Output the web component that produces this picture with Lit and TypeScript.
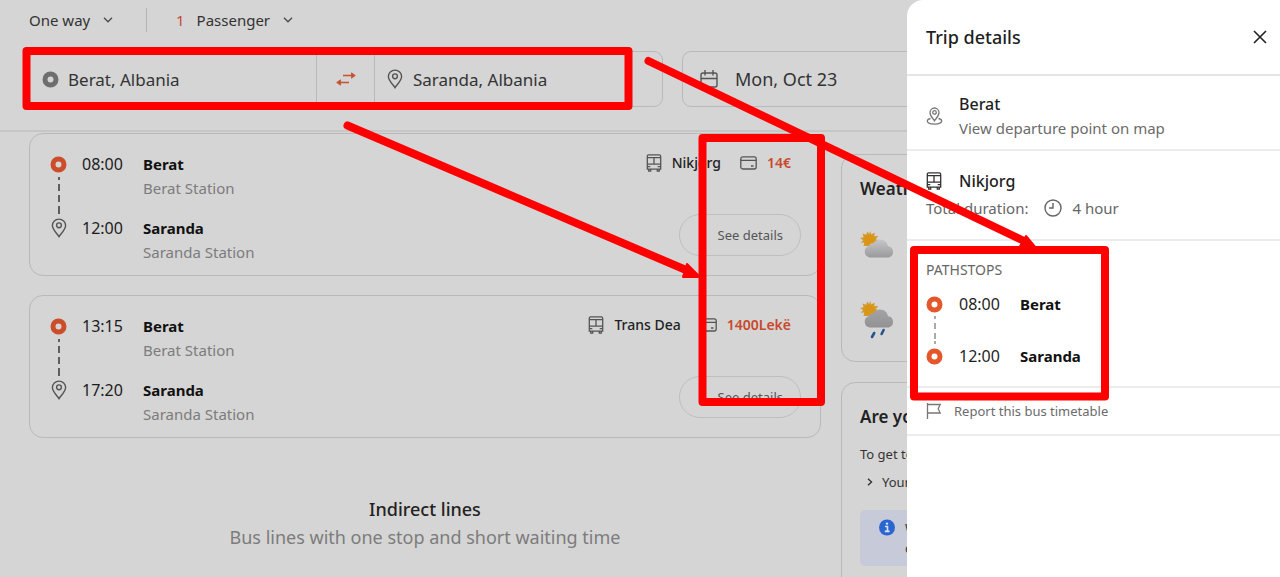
import { LitElement, html, css, svg, nothing } from "lit";
import { customElement } from "lit/decorators.js";

interface Stop {
  time: string;
  city: string;
  station: string;
}

interface Trip {
  operator: string;
  price: string;
  stops: Stop[];
}

const TRIPS: Trip[] = [
  {
    operator: "Nikjorg",
    price: "14€",
    stops: [
      { time: "08:00", city: "Berat", station: "Berat Station" },
      { time: "12:00", city: "Saranda", station: "Saranda Station" },
    ],
  },
  {
    operator: "Trans Dea",
    price: "1400Lekë",
    stops: [
      { time: "13:15", city: "Berat", station: "Berat Station" },
      { time: "17:20", city: "Saranda", station: "Saranda Station" },
    ],
  },
];

const chevron = html`<svg class="chevron" width="10" height="6" viewBox="0 0 10 6" fill="none" stroke="#4a4a4a" stroke-width="1.3"><path d="M1 .8 5 4.8 9 .8" /></svg>`;

const ring = (color: string, hole: string) =>
  html`<svg class="ring" width="17" height="17" viewBox="0 0 17 17"><circle cx="8.500" cy="8.500" r="5.500" fill=${hole} stroke=${color} stroke-width="5" /></svg>`;

const pin = html`<svg class="pin" width="16" height="20" viewBox="0 0 16 20" fill="none" stroke="#555" stroke-width="1.4">
  <path d="M8 18.6C6.600 16 1.400 11.800 1.400 7.500a6.600 6.400 0 0 1 13.200 0C14.600 11.800 9.400 16 8 18.600Z" />
  <circle cx="8" cy="7.300" r="2.400" />
</svg>`;

const bus = (color: string) => html`<svg class="bus" width="16" height="18" viewBox="0 0 16 18" fill="none" stroke=${color} stroke-width="1.3">
  <path d="M1.300 2.400q0-1.500 1.500-1.500h10.400q1.500 0 1.500 1.500v12.800H1.300ZM1.300 3.600h13.400M1.300 10.200h13.400M8 3.600v6.600M1.300 12.600h3M11.700 12.600h3M2.700 15.200v1.900h2v-1.900M11.300 15.200v1.900h2v-1.900" />
</svg>`;

const card = html`<svg class="card-icon" width="17" height="14" viewBox="0 0 17 14" fill="none" stroke="#555" stroke-width="1.300">
  <rect x=".8" y=".8" width="15.400" height="12.200" rx="2" />
  <path d="M.8 4.400h15.400M11 10h2.500" />
</svg>`;

const sun = svg`<g>
  <path d="M10 0l1.400 3.600L14.600 1.400l-.2 3.800 3.900-.2-2.500 3 3.200 2-3.600 1.400 1.400 3.600H3.600l.6-3.400L.6 11.800l2.600-2.600L0 7l3.600-.8L2.600 2.600l3.600 1.200L7.200.4l2 2.800Z" fill="#d29a2c" />
  <circle cx="9.500" cy="9" r="5" fill="#db9512" />
</g>`;

const cloud = svg`<path d="M9.500 26.500a6 6 0 0 1-.6-11.600 4.500 4.500 0 0 1 4.600-2.900 8 8 0 0 1 14.500 3.300 5.700 5.700 0 0 1 .7 11.200Z" fill="url(#cloud)" />`;

const rainCloud = svg`<path d="M9.500 26.500a6 6 0 0 1-.6-11.600 4.500 4.500 0 0 1 4.600-2.900 8 8 0 0 1 14.500 3.300 5.700 5.700 0 0 1 .7 11.200Z" fill="url(#rain-cloud)" />`;

const weather = (rain: boolean) => html`<svg width="35" height=${rain ? 38 : 28} viewBox=${rain ? "0 0 35 38" : "0 0 35 28"}>
  <defs>
    <linearGradient id=${rain ? "rain-cloud" : "cloud"} x1="0" y1="0" x2="0" y2="1">
      <stop offset="0" stop-color=${rain ? "#a3a3a6" : "#c6c6c8"} />
      <stop offset="1" stop-color=${rain ? "#929295" : "#9a9a9c"} />
    </linearGradient>
  </defs>
  ${sun}${rain ? rainCloud : cloud}
  ${rain
    ? svg`<path d="M14.200 32l-2.200 4M23.600 29l-2 4" stroke="#27548f" stroke-width="2.600" stroke-linecap="round" />`
    : nothing}
</svg>`;

const shared = css`
  * {
    box-sizing: border-box;
  }
  h2, h3, p, ol, ul {
    margin: 0;
    padding: 0;
    font-size: inherit;
    font-weight: 400;
    list-style: none;
  }
  button, select, input {
    font: inherit;
    color: inherit;
    background: none;
    border: 0;
    padding: 0;
    margin: 0;
  }
  button {
    cursor: pointer;
  }
  svg {
    display: block;
    flex: none;
  }
`;

@customElement("search-header")
export class SearchHeader extends LitElement {
  static styles = [
    shared,
    css`
      :host {
        display: block;
        padding: 8px 29px 23px;
        border-bottom: 2px solid #c6c6c6;
        color: #333;
      }
      .options {
        display: flex;
        align-items: center;
        height: 24px;
        font-size: 15px;
        margin-bottom: 19px;
      }
      .option {
        display: flex;
        align-items: center;
        gap: 12px;
      }
      select {
        appearance: none;
      }
      .option + .option {
        margin-left: 33px;
        padding-left: 29px;
        border-left: 1px solid #b4b4b4;
        height: 24px;
      }
      .count {
        color: #c74a36;
      }
      .bar {
        display: grid;
        grid-template-columns: 634px 1fr;
        gap: 19px;
        font-size: 17px;
      }
      .box {
        display: flex;
        height: 56px;
        border: 1px solid #b9b9b9;
        border-radius: 9px;
      }
      .journey {
        display: grid;
        grid-template-columns: 286px 59px 1fr;
      }
      .field {
        display: flex;
        align-items: center;
        gap: 9px;
        padding-left: 12px;
        min-width: 0;
      }
      .swap + .field {
        gap: 10px;
      }
      .field input {
        flex: 1;
        min-width: 0;
      }
      .swap {
        display: grid;
        place-items: center;
        border: 1px solid #b9b9b9;
        border-width: 0 1px;
      }
      .date {
        align-items: center;
        gap: 17px;
        padding-left: 17px;
        font-size: 18px;
      }
    `,
  ];

  render() {
    return html`
      <div class="options">
        <label class="option">
          <select aria-label="Trip type"><option>One way</option></select>
          ${chevron}
        </label>
        <label class="option">
          <span class="count">1</span>
          <select aria-label="Passengers"><option>Passenger</option></select>
          ${chevron}
        </label>
      </div>
      <div class="bar">
        <div class="box journey">
          <label class="field">${ring("#6e6e6e", "#d5d5d5")}<input aria-label="From" value="Berat, Albania" /></label>
          <button class="swap" aria-label="Swap">
            <svg width="20" height="14" viewBox="0 0 20 14" fill="none" stroke="#c6522f" stroke-width="1.600">
              <path d="M7 3.500h10M3 10.500h10" />
              <path d="M15.500.8 19.300 3.500l-3.800 2.700ZM4.500 7.800.7 10.500l3.800 2.700Z" fill="#c6522f" stroke-width=".8" />
            </svg>
          </button>
          <label class="field">${pin}<input aria-label="To" value="Saranda, Albania" /></label>
        </div>
        <button class="box date">
          <svg width="18" height="18" viewBox="0 0 18 18" fill="none" stroke="#555" stroke-width="1.400">
            <rect x="1" y="3" width="16" height="14" rx="2" />
            <path d="M1 8.500h16M5 0v5.500M13 0v5.500" />
          </svg>
          Mon, Oct 23
        </button>
      </div>
    `;
  }
}

@customElement("trip-card")
export class TripCard extends LitElement {
  static properties = { trip: { attribute: false } };
  declare trip: Trip;

  static styles = [
    shared,
    css`
      :host {
        display: flex;
        justify-content: space-between;
        padding: 18px 19px 11px 20px;
        border: 1px solid #b9b9b9;
        border-radius: 14px;
        font-size: 15px;
        line-height: 24px;
      }
      .stop {
        display: grid;
        grid-template-columns: 17px 46px 1fr;
        column-gap: 15px;
      }
      .stop + .stop .rail {
        padding-top: 2px;
      }
      .rail {
        display: flex;
        flex-direction: column;
        align-items: center;
        padding-top: 4px;
      }
      .line {
        flex: 1;
        width: 2px;
        margin: 4px 0 2px;
        background: repeating-linear-gradient(#5e5e5e 0 7px, transparent 7px 11px);
        background-position-y: -4px;
      }
      .stop:not(:last-child) .place {
        padding-bottom: 16px;
      }
      .time {
        font-size: 16px;
        color: #1c1c1c;
      }
      .city {
        font-weight: 700;
        color: #111;
      }
      .station {
        color: #7c7c7c;
      }
      .side {
        display: flex;
        flex-direction: column;
        align-items: flex-end;
        justify-content: space-between;
        padding-bottom: 8px;
        font-size: 14px;
      }
      .offer {
        display: flex;
        align-items: center;
        gap: 10px;
        padding-right: 10px;
        height: 22px;
      }
      .operator {
        font-weight: 500;
        color: #222;
        margin-right: 9px;
      }
      .price {
        font-weight: 600;
        color: #c9492b;
      }
      .details {
        height: 42px;
        padding: 0 17px 0 38px;
        border: 1px solid #bfbfbf;
        border-radius: 22px;
        font-size: 13px;
        color: #555;
      }
    `,
  ];

  render() {
    const { stops, operator, price } = this.trip;
    return html`
      <ol>
        ${stops.map(
          (s, i) => html`<li class="stop">
            <div class="rail">
              ${i < stops.length - 1 ? html`${ring("#cc4d2a", "#d5d5d5")}<span class="line"></span>` : pin}
            </div>
            <span class="time">${s.time}</span>
            <div class="place">
              <h3 class="city">${s.city}</h3>
              <p class="station">${s.station}</p>
            </div>
          </li>`
        )}
      </ol>
      <div class="side">
        <div class="offer">
          ${bus("#555")}<span class="operator">${operator}</span>${card}<span class="price">${price}</span>
        </div>
        <button class="details">See details</button>
      </div>
    `;
  }
}

@customElement("side-column")
export class SideColumn extends LitElement {
  static styles = [
    shared,
    css`
      :host {
        display: flex;
        flex-direction: column;
        gap: 20px;
        color: #333;
        font-size: 13px;
      }
      .panel {
        border: 1px solid #b9b9b9;
        border-radius: 14px;
        padding: 20px 18px 10px;
      }
      .advice {
        padding-bottom: 32px;
      }
      h2 {
        font-size: 17px;
        line-height: 28px;
        font-weight: 600;
        color: #222;
      }
      .forecast {
        display: grid;
        gap: 42px;
        padding: 28px 0 12px;
      }
      .lead {
        line-height: 24px;
        padding-top: 11px;
      }
      .item {
        display: flex;
        align-items: center;
        gap: 9px;
        padding-left: 7px;
        line-height: 32px;
      }
      .note {
        display: flex;
        gap: 10px;
        margin-top: 12px;
        padding: 8px 19px;
        border-radius: 5px;
        background: #c7cad8;
        line-height: 20px;
      }
    `,
  ];

  render() {
    return html`
      <section class="panel">
        <h2>Weather</h2>
        <div class="forecast">${weather(false)}${weather(true)}</div>
      </section>
      <section class="panel advice">
        <h2>Are you</h2>
        <p class="lead">To get to</p>
        <p class="item">
          <svg width="6" height="8" viewBox="0 0 6 8" fill="none" stroke="#333" stroke-width="1.400"><path d="M1 .8 4.500 4 1 7.200" /></svg>
          Your
        </p>
        <div class="note">
          <svg width="16" height="18" viewBox="0 0 16 18">
            <circle cx="8" cy="9.500" r="8" fill="#2b65cf" />
            <path d="M6 8.500h2.500v5M5.800 13.400h4.800" stroke="#dbe3f2" stroke-width="1.600" fill="none" />
            <circle cx="8" cy="5.600" r="1.200" fill="#dbe3f2" />
          </svg>
          <p>We<br />can</p>
        </div>
      </section>
    `;
  }
}

@customElement("trip-drawer")
export class TripDrawer extends LitElement {
  static styles = [
    shared,
    css`
      :host {
        display: block;
        background: #fff;
        border-top-left-radius: 16px;
        color: #1f1f1f;
        font-size: 15px;
        line-height: 24px;
      }
      header {
        display: flex;
        align-items: center;
        justify-content: space-between;
        height: 76px;
        padding: 0 13px 0 19px;
        border-bottom: 2px solid #e6e6e6;
      }
      h2 {
        font-size: 18px;
        font-weight: 500;
      }
      section {
        padding: 0 19px;
        border-bottom: 2px solid #ececec;
      }
      .row {
        display: flex;
        align-items: center;
        gap: 16px;
      }
      .departure {
        padding-top: 16px;
        padding-bottom: 9px;
      }
      .name {
        font-size: 16px;
        font-weight: 500;
      }
      .muted {
        color: #666;
      }
      a {
        color: #6b6b6b;
        text-decoration: none;
      }
      .operator {
        padding-top: 18px;
        padding-bottom: 16px;
      }
      .operator .row {
        gap: 17px;
      }
      .duration {
        display: flex;
        align-items: center;
        gap: 10px;
        height: 30px;
      }
      .duration svg {
        margin-left: 6px;
      }
      .path {
        padding-top: 19px;
        padding-bottom: 18px;
      }
      .caption {
        font-size: 14px;
        line-height: 20px;
        color: #666;
        padding-bottom: 12px;
      }
      .stop {
        display: grid;
        grid-template-columns: 17px 45px 1fr;
        column-gap: 16px;
      }
      .stop:not(:last-child) {
        height: 52px;
      }
      .time {
        font-size: 16px;
      }
      .city {
        font-weight: 700;
        color: #111;
      }
      .rail {
        display: flex;
        flex-direction: column;
        align-items: center;
        padding-top: 4px;
      }
      .line {
        width: 2px;
        height: 28px;
        margin-top: 3px;
        background: repeating-linear-gradient(#aaa 0 6px, transparent 6px 10px);
        background-position-y: -3px;
      }
      .report {
        display: flex;
        align-items: center;
        gap: 12px;
        height: 46px;
        width: 100%;
        font-size: 13px;
        color: #6b6b6b;
      }
    `,
  ];

  render() {
    const path = TRIPS[0];
    return html`
      <header>
        <h2>Trip details</h2>
        <button aria-label="Close">
          <svg width="14" height="14" viewBox="0 0 14 14" fill="none" stroke="#222" stroke-width="1.600"><path d="M1 1l12 12M13 1L1 13" /></svg>
        </button>
      </header>
      <section class="departure row">
        <svg width="17" height="18" viewBox="0 0 17 18" fill="none" stroke="#777" stroke-width="1.300">
          <path d="M8.500 13.800C7.500 12 4 9.300 4 5.600a4.500 4.600 0 0 1 9 0c0 3.700-3.500 6.400-4.500 8.200Z" />
          <circle cx="8.500" cy="5.400" r="1.800" />
          <path d="M4.500 11.500C2.500 12 1.300 13 1.300 14.100c0 1.700 3.200 3 7.200 3s7.200-1.300 7.200-3c0-1.100-1.200-2.100-3.200-2.600" />
        </svg>
        <div>
          <h3 class="name">Berat</h3>
          <a href="#map">View departure point on map</a>
        </div>
      </section>
      <section class="operator">
        <div class="row">${bus("#333")}<h3 class="name">${path.operator}</h3></div>
        <p class="duration muted">
          Total duration:
          <svg width="18" height="18" viewBox="0 0 18 18" fill="none" stroke="#666" stroke-width="1.400"><circle cx="9" cy="9" r="8" /><path d="M9 4v5H5" /></svg>
          4 hour
        </p>
      </section>
      <section class="path">
        <p class="caption">PATHSTOPS</p>
        <ol>
          ${path.stops.map(
            (s, i) => html`<li class="stop">
              <div class="rail">
                ${ring("#e6562b", "#fff")}${i < path.stops.length - 1 ? html`<span class="line"></span>` : nothing}
              </div>
              <span class="time">${s.time}</span>
              <h3 class="city">${s.city}</h3>
            </li>`
          )}
        </ol>
      </section>
      <section>
        <button class="report">
          <svg width="16" height="16" viewBox="0 0 16 16" fill="none" stroke="#777" stroke-width="1.300"><path d="M1.500 0v16M1.500 1.500h12.700l-2 4.200 2 4.300H1.500" /></svg>
          Report this bus timetable
        </button>
      </section>
    `;
  }
}

@customElement("app-root")
export class AppRoot extends LitElement {
  static styles = [
    shared,
    css`
      :host {
        display: block;
        position: relative;
        min-height: 100vh;
        background: #d5d5d5;
        font-family: "Noto Sans", "Open Sans", sans-serif;
        overflow: hidden;
      }
      .page {
        height: 100vh;
        overflow: hidden;
      }
      .columns {
        display: grid;
        grid-template-columns: 1fr 410px;
        gap: 20px;
        padding: 1px 29px 0;
      }
      .results {
        display: flex;
        flex-direction: column;
        gap: 19px;
      }
      .indirect {
        padding-top: 38px;
        text-align: center;
        font-size: 18px;
        line-height: 28px;
        color: #7c7c7c;
      }
      .indirect h2 {
        font-weight: 500;
        color: #222;
      }
      .side {
        padding-top: 21px;
      }
      .drawer {
        position: absolute;
        inset: 0 0 0 auto;
        width: 373px;
      }
      .marks {
        position: absolute;
        top: 0;
        left: 0;
        pointer-events: none;
      }
    `,
  ];

  render() {
    return html`
      <div class="page">
        <search-header></search-header>
        <main class="columns">
          <div class="results">
            ${TRIPS.map((t) => html`<trip-card .trip=${t}></trip-card>`)}
            <div class="indirect">
              <h2>Indirect lines</h2>
              <p>Bus lines with one stop and short waiting time</p>
            </div>
          </div>
          <side-column class="side"></side-column>
        </main>
      </div>
      <trip-drawer class="drawer"></trip-drawer>
      <svg class="marks" width="1280" height="577" viewBox="0 0 1280 577" fill="none" stroke="#fe0000" stroke-width="8" stroke-linejoin="round" stroke-linecap="round">
        <rect x="26.500" y="51" width="602" height="55" />
        <rect x="702.500" y="138" width="118.500" height="264" />
        <rect x="914" y="250" width="191" height="146.500" />
        <path d="M347.500 125.500 686 270M648.500 61 1024 241" />
        <path d="M687 264l13 13h-17ZM1026 236l10 12h-17Z" fill="#fe0000" stroke-width="2" />
      </svg>
    `;
  }
}
